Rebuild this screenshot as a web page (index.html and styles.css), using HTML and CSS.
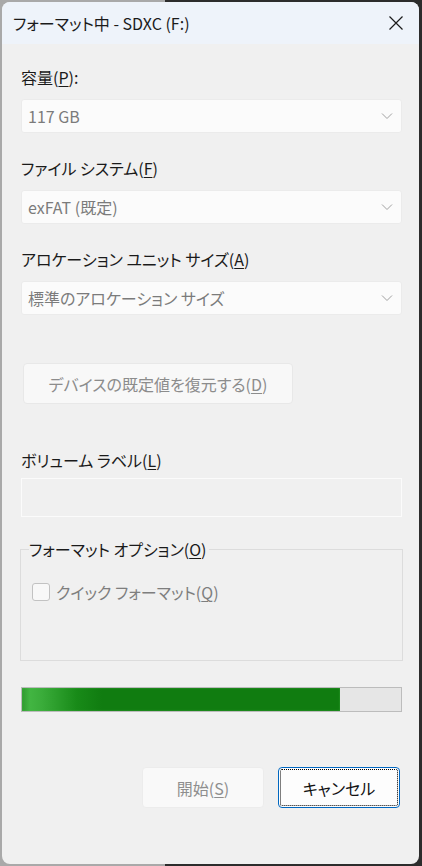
FILE: index.html
```html
<!DOCTYPE html>
<html lang="ja">
<head>
    <meta charset="UTF-8">
    <meta name="viewport" content="width=device-width, initial-scale=1.0">
    <title>フォーマット中 - SDXC (F:)</title>
    <link rel="stylesheet" href="styles.css">
</head>
<body>

<div class="window">
    <div class="titlebar">
        <span class="title">フォーマット中 - SDXC (F:)</span>
        <svg class="close" width="16" height="16" viewBox="0 0 16 16">
            <path d="M1.5 1.5 L14.5 14.5 M14.5 1.5 L1.5 14.5" stroke="#1b1b1b" stroke-width="1.2" fill="none"/>
        </svg>
    </div>

    <div class="content">
        <div class="label first">容量(<u>P</u>):</div>
        <div class="combo">
            <span>117 GB</span>
            <svg class="chevron" width="12" height="8" viewBox="0 0 12 8">
                <polyline points="1,1.5 6,6.5 11,1.5" stroke="#a0a0a0" stroke-width="1" fill="none"/>
            </svg>
        </div>

        <div class="label">ファイル システム(<u>F</u>)</div>
        <div class="combo">
            <span>exFAT (既定)</span>
            <svg class="chevron" width="12" height="8" viewBox="0 0 12 8">
                <polyline points="1,1.5 6,6.5 11,1.5" stroke="#a0a0a0" stroke-width="1" fill="none"/>
            </svg>
        </div>

        <div class="label">アロケーション ユニット サイズ(<u>A</u>)</div>
        <div class="combo">
            <span>標準のアロケーション サイズ</span>
            <svg class="chevron" width="12" height="8" viewBox="0 0 12 8">
                <polyline points="1,1.5 6,6.5 11,1.5" stroke="#a0a0a0" stroke-width="1" fill="none"/>
            </svg>
        </div>

        <div class="restore-btn">デバイスの既定値を復元する(<u>D</u>)</div>

        <div class="label volume">ボリューム ラベル(<u>L</u>)</div>
        <div class="textbox"></div>

        <fieldset class="options">
            <legend>フォーマット オプション(<u>O</u>)</legend>
            <div class="check-row">
                <span class="checkbox"></span>
                <span class="check-text">クイック フォーマット(<u>Q</u>)</span>
            </div>
        </fieldset>

        <div class="progress">
            <div class="progress-fill" style="width: 84%"></div>
        </div>

        <div class="buttons">
            <div class="btn disabled">開始(<u>S</u>)</div>
            <div class="btn focused">キャンセル</div>
        </div>
    </div>
</div>

</body>
</html>
```

FILE: styles.css
```css
body {
    margin: 0;
    width: 422px;
    height: 866px;
    overflow: hidden;
    background: linear-gradient(to right, #a9a9a9 0, #a9a9a9 165px, #2c2c2c 165px, #2c2c2c 100%);
    font-family: "Noto Sans CJK JP", "Noto Sans", sans-serif;
    font-feature-settings: "palt";
    font-size: 16px;
    color: #1a1a1a;
}

u {
    text-decoration-thickness: 1px;
    text-underline-offset: 2px;
}

.window {
    margin: 2px;
    width: 417px;
    height: 862px;
    border-radius: 8px;
    overflow: hidden;
    background-color: #f0f0f0;
}

.titlebar {
    height: 42px;
    background-color: #eef3fa;
    display: flex;
    align-items: center;
    justify-content: space-between;
    padding: 0 15px 0 11px;
}

.title {
    font-size: 16px;
    color: #1b1b1b;
}

.close {
    display: block;
}

.content {
    padding: 0 17px 0 19px;
}

.label {
    line-height: 20px;
    height: 20px;
    margin-top: 25px;
}

.label.first {
    margin-top: 23px;
}

.combo {
    margin-top: 12px;
    height: 34px;
    box-sizing: border-box;
    background-color: #fbfbfb;
    border: 1px solid #ebebeb;
    border-radius: 3px;
    display: flex;
    align-items: center;
    justify-content: space-between;
    padding: 0 8px 0 6px;
    color: #7b7b7b;
}

.chevron {
    display: block;
}

.restore-btn {
    margin-top: 48px;
    margin-left: 2px;
    width: 270px;
    height: 41px;
    box-sizing: border-box;
    background-color: #f8f8f8;
    border: 1px solid #e8e8e8;
    border-radius: 4px;
    display: flex;
    align-items: center;
    justify-content: center;
    color: #8c8c8c;
}

.label.volume {
    margin-top: 46px;
}

.textbox {
    margin-top: 8px;
    height: 39px;
    box-sizing: border-box;
    border: 1px solid #fbfbfb;
    background-color: #f0f0f0;
}

.options {
    margin: 22px 0 0 -1px;
    padding: 0 0 0 11px;
    height: 122px;
    box-sizing: border-box;
    width: 383px;
    border: 1px solid #dcdcdc;
}

.options legend {
    padding: 0 2px 0 0;
    margin-left: -3px;
    line-height: 20px;
}

.check-row {
    display: flex;
    align-items: center;
    gap: 6px;
    margin-top: 21px;
}

.checkbox {
    width: 18px;
    height: 18px;
    box-sizing: border-box;
    border: 1px solid #c2c2c2;
    border-radius: 3px;
    background-color: #f8f8f8;
}

.check-text {
    color: #7e7e7e;
}

.progress {
    margin-top: 26px;
    height: 25px;
    box-sizing: border-box;
    border: 1px solid #bcbcbc;
    background-color: #e6e6e6;
}

.progress-fill {
    height: 100%;
    background: linear-gradient(to right, #2f9a2f 0, #42b542 8px, #3aac3a 20px, #188a18 55px, #107c10 80px, #107c10 100%);
    box-shadow: inset 0 0 2px rgba(90, 200, 90, 0.6);
}

.buttons {
    margin-top: 55px;
    display: flex;
    justify-content: flex-end;
    gap: 14px;
    padding-right: 2px;
}

.btn {
    width: 122px;
    height: 41px;
    box-sizing: border-box;
    border-radius: 4px;
    display: flex;
    align-items: center;
    justify-content: center;
}

.btn.disabled {
    background-color: #f9f9f9;
    border: 1px solid #ececec;
    color: #8e8e8e;
}

.btn.focused {
    background-color: #fdfdfd;
    border: 1px solid #0067c0;
    outline: 1px dotted #000;
    outline-offset: -3px;
    color: #111;
}
```
